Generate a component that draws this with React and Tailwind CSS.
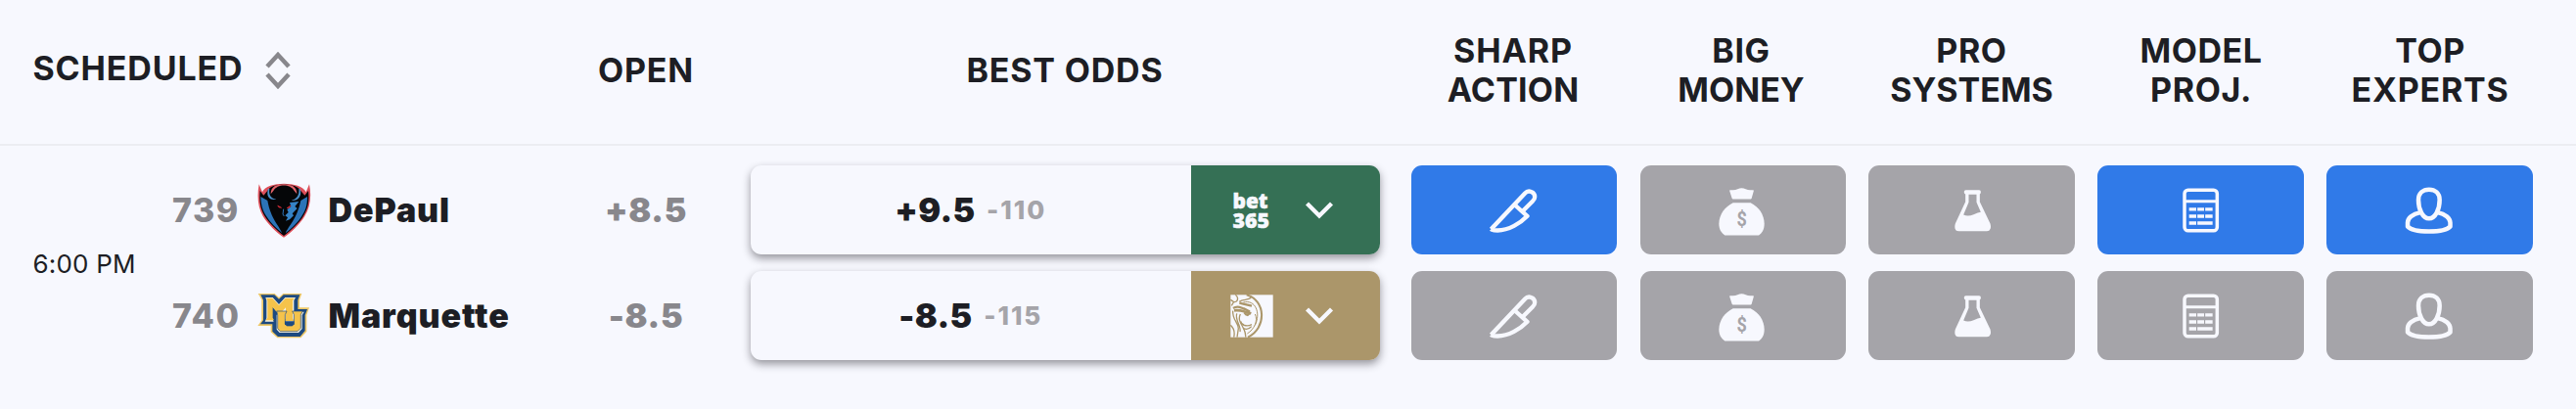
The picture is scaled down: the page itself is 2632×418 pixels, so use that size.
import React from "react";

const COLS = "grid grid-cols-[573px_174px_683px_1170px]";

function DePaulLogo() {
  return (
    <svg width="56" height="60" viewBox="36 44 168 180" className="shrink-0">
      <path d="M44 54C37 92 41 126 56 152C72 178 98 202 120 217C142 202 168 178 184 152C200 126 206 92 198 54L188 78C172 44 68 44 54 78Z" fill="#dd4f5a" />
      <path d="M47 74C44 104 48 128 60 149C76 175 100 196 120 212C140 196 166 175 181 149C194 128 199 104 195 74L184 88L172 74C160 48 80 48 70 74L58 88Z" fill="#050608" />
      <path d="M49 92C50 120 56 135 64 148C78 171 96 188 115 204C104 178 80 160 70 104Z" fill="#2c74b8" />
      <path d="M192 92C192 120 186 135 177 148C164 170 148 186 125 204C136 180 160 160 172 104Z" fill="#2c74b8" />
      <path d="M80 84C80 60 98 55 120 54C142 55 160 60 160 84L152 74C140 52 100 52 88 74Z" fill="#e2636a" />
      <path d="M92 74C96 58 144 58 149 76L156 100L140 160L120 208L104 178L84 128L84 102Z" fill="#050608" />
      <path d="M72 68C65 92 76 104 97 100C80 98 73 86 76 68ZM170 68C177 92 162 106 143 104C158 100 169 88 166 68Z" fill="#4b8fc9" />
      <path d="M138 110L166 107L154 122L161 128L146 144L150 150L138 162L126 166L132 156L124 150L134 140L130 132L142 122Z" fill="#3583c6" />
      <path d="M101 119L113 126L105 125ZM141 119L129 127L137 126Z" fill="#e2303c" stroke="#e2303c" strokeWidth="1.5" />
      <path d="M119 130L117 146L121 152" fill="none" stroke="#2c74b8" strokeWidth="3" />
    </svg>
  );
}

function MarquetteLogo() {
  return (
    <svg width="56" height="50" viewBox="36 384 168 150" className="shrink-0">
      <path d="M41 390H92L105 402L118 390H175L168 410V433H198L190 456V506L172 526H100L80 508V489H40L52 472V409Z" fill="#edc766" />
      <path d="M49 394H91L105 407L119 394H169L163 410V438H192L185 456V504L170 522H102L85 506V484H48L57 472V410Z" fill="#1d4a80" />
      <path d="M64 402H86L105 423L124 402H156L151 411V452H157V446H182L176 456V498L165 510H107L98 500V456L106 444H114L105 452L84 429V466L89 476H62L67 466V411Z" fill="#f5f0df" />
      <path d="M66 404H85L105 426L125 404H152L147 412V466L151 474H120L126 466V433L105 455L86 432V464L90 472H65L70 464V412Z" fill="#f5c34b" />
      <path d="M98 444H129L124 455V482L130 488H145L151 482V455L146 444H178L172 455V496L162 506H109L101 497V456Z" fill="#f5c34b" stroke="#1d4a80" strokeWidth="2" />
      <path d="M123 475H152V484L146 490H129L123 484Z" fill="#1d4a80" />
    </svg>
  );
}

function KnifeIcon() {
  return (
    <svg width="60" height="60" viewBox="260.5 73.5 180 180">
      <g fill="none" stroke="#f7f8fe" strokeWidth="13" strokeLinejoin="round">
        <path d="M280 221L384 111C394 100 414 106 414 122C414 128 411 132 407 136L377 166" />
        <path d="M353 147L391 181C370 203 334 225 300 225C289 225 282 223 280 221" />
      </g>
    </svg>
  );
}

function MoneyBagIcon({ active }) {
  return (
    <svg width="60" height="60" viewBox="961 73.5 180 180">
      <g fill="#f7f8fe">
        <path d="M1009 102C1014 100 1026 102 1034 98C1042 94 1051 94 1059 98C1067 102 1079 100 1084 102L1077 127Q1076 129 1074 129H1020Q1018 129 1017 127Z" />
        <path d="M1020 140H1074C1098 152 1116 175 1116 205C1116 222 1109 234 1099 240H995C985 234 977 222 977 205C977 175 996 152 1020 140Z" />
      </g>
      <text x="1047" y="210" textAnchor="middle" fontSize="60" textLength="31" lengthAdjust="spacingAndGlyphs" className={active ? "fill-[#307ae8] font-['Roboto'] font-bold" : "fill-[#a5a4a9] font-['Roboto'] font-bold"}>$</text>
    </svg>
  );
}

function FlaskIcon() {
  return (
    <svg width="60" height="60" viewBox="283.5 73.5 180 180">
      <g fill="#f7f8fe">
        <rect x="349" y="101" width="51" height="13" rx="5" />
        <path fillRule="evenodd" d="M353 110V137L322 204Q316 227 333 227H418Q435 227 429 204L397 137V110ZM363 114V139L347 177Q361 183 378 176Q392 170 400 169L387 139V114Z" />
      </g>
    </svg>
  );
}

function CalculatorIcon() {
  return (
    <svg width="60" height="60" viewBox="986 73.5 180 180">
      <rect x="1025" y="101" width="100" height="125" rx="11" fill="none" stroke="#f7f8fe" strokeWidth="10.5" />
      <path d="M1025 136H1125" stroke="#f7f8fe" strokeWidth="9" />
      <path d="M1039 160H1061M1064.500 160H1085M1088.500 160H1111M1039 181.500H1061M1064.500 181.500H1085M1088.500 181.500H1111M1039 202.500H1061M1064.500 202.500H1111" stroke="#f7f8fe" strokeWidth="10" />
    </svg>
  );
}

function PersonIcon() {
  return (
    <svg width="60" height="60" viewBox="337 73.5 180 180">
      <g fill="none" stroke="#f7f8fe" strokeWidth="13.5" strokeLinejoin="round">
        <path d="M426.500 99.500C445 99.500 459 111 459 131C459 160 446 188.500 426.500 188.500C407 188.500 394 160 394 131C394 111 408 99.500 426.500 99.500Z" />
        <path d="M400 170C375 175 361 188 361 201V213C378 233 475 233 491.500 213V201C491 188 477 175 453 170" />
      </g>
    </svg>
  );
}

function Chevron() {
  return (
    <svg width="30" height="20" viewBox="0 0 30 20">
      <path d="M2.500 3L15 15.500L27.500 3" fill="none" stroke="#f7f8fe" strokeWidth="4.300" />
    </svg>
  );
}

function Bet365Logo() {
  return (
    <svg width="44" height="44" viewBox="0 0 44 44" className="overflow-visible fill-[#f7f8fe] stroke-[#f7f8fe] font-['Open_Sans',sans-serif] font-extrabold">
      <text x="2.5" y="20" fontSize="21.5" textLength="36" lengthAdjust="spacingAndGlyphs" strokeWidth="0.5">bet</text>
      <text x="2.5" y="39.500" fontSize="21.5" textLength="37.5" lengthAdjust="spacingAndGlyphs" strokeWidth="0.5">365</text>
    </svg>
  );
}

function LionLogo() {
  return (
    <svg width="44" height="44" viewBox="772 452 132 132">
      <rect x="773" y="453" width="130" height="130" fill="#f7f8fe" />
      <g fill="none" stroke="#ab966a" strokeWidth="4" strokeLinecap="butt">
        <path d="M822 453C882 470 884 555 826 583" strokeWidth="6" />
        <path d="M812 476C850 466 866 510 848 546" strokeWidth="3" />
        <path d="M773 468L782 474C794 478 800 462 788 453M782 476L776 486M800 474C812 466 826 470 836 462" />
        <path d="M800 478L838 487M781 494C796 484 810 494 832 504" strokeWidth="7" />
        <path d="M784 501C800 498 816 504 836 510" strokeWidth="8" />
        <path d="M780 502C778 530 796 536 797 556L793 583M792 510C786 532 806 548 802 566" strokeWidth="4" />
        <path d="M803 512C790 538 822 552 819 583M773 546C784 556 786 570 783 583" strokeWidth="4" />
        <path d="M804 534C806 546 822 552 838 544M812 556C822 560 832 556 837 550" strokeWidth="4" />
        <path d="M848 512C858 532 846 558 824 572" strokeWidth="3" />
      </g>
      <path d="M812 508L834 511L826 519L818 516Z" fill="#ab966a" />
    </svg>
  );
}

const teams = [
  { id: "739", name: "DePaul", logo: <DePaulLogo />, open: "+8.5", line: "+9.5", price: "-110", active: [true, false, false, true, true] },
  { id: "740", name: "Marquette", logo: <MarquetteLogo />, open: "-8.5", line: "-8.5", price: "-115", active: [false, false, false, false, false] },
];

const icons = [KnifeIcon, MoneyBagIcon, FlaskIcon, CalculatorIcon, PersonIcon];

export default function App() {
  return (
    <div className="h-[418px] w-[2632px] overflow-hidden bg-[#f7f8fe] font-['Inter',sans-serif] text-[#1d1e24]">
      <header className={`${COLS} h-[148.5px] items-center border-b-[2.5px] border-[#ecedf2] text-[34px] leading-10 font-bold whitespace-nowrap`}>
        <div className="flex items-center gap-[22.5px] pb-[7px] pl-[33.5px]">
          <span className="tracking-[0.85px]">SCHEDULED</span>
          <svg width="26" height="40" viewBox="0 0 26 40" className="mt-[5px]">
            <path d="M2 16L13 4L24 16M2 24L13 36L24 24" fill="none" stroke="#88878c" strokeWidth="4.500" />
          </svg>
        </div>
        <div className="pb-0.5 text-center tracking-[0.8px]">OPEN</div>
        <div className="pr-px pb-0.5 text-center tracking-[0.8px]">BEST ODDS</div>
        <div className="grid grid-cols-5 pb-[3px] text-center">
          <div className="pr-0.5"><div className="tracking-[0.9px]">SHARP</div><div className="tracking-[0.2px]">ACTION</div></div>
          <div className="pr-1"><div className="tracking-[0.6px]">BIG</div><div>MONEY</div></div>
          <div className="pr-px"><div className="tracking-[0.6px]">PRO</div><div>SYSTEMS</div></div>
          <div><div className="tracking-[0.5px]">MODEL</div><div className="tracking-[0.7px]">PROJ.</div></div>
          <div><div className="tracking-[0.6px]">TOP</div><div className="tracking-[0.75px]">EXPERTS</div></div>
        </div>
      </header>

      <main className={`${COLS} pt-[20.5px]`}>
        <div className="flex items-center pl-[33.5px]">
          <div className="w-[142.5px] pt-0.5 text-[26px] tracking-[0.2px]">6:00 PM</div>
          <div className="flex flex-col gap-[17px]">
            {teams.map((t) => (
              <div key={t.id} className="flex h-[91px] items-center text-[34px] font-black">
                <span className="w-[86px] font-extrabold tracking-[1.5px] text-[#88878c]">{t.id}</span>
                {t.logo}
                <span className="ml-[17.5px] tracking-[0.9px]">{t.name}</span>
              </div>
            ))}
          </div>
        </div>

        <div className="flex flex-col gap-[17px]">
          {teams.map((t) => (
            <div key={t.id} className="flex h-[91px] items-center justify-center text-[34px] font-black tracking-[0.7px] text-[#88878c]">{t.open}</div>
          ))}
        </div>

        <div className="flex flex-col gap-[17px] px-5">
          {teams.map((t, i) => (
            <div key={t.id} className="flex h-[91px] overflow-hidden rounded-[11px] bg-[#f7f8fe] shadow-[0_4px_9px_rgba(30,29,38,0.45)]">
              <div className="flex w-[449.5px] items-center justify-center gap-[11.5px]">
                <span className="text-[34px] font-black tracking-[0.4px]">{t.line}</span>
                <span className="text-[26px] font-extrabold tracking-[2px] text-[#a5a4a9]">{t.price}</span>
              </div>
              <div className={i === 0 ? "flex flex-1 items-center gap-[31.5px] bg-[#357055] pl-[40.5px]" : "flex flex-1 items-center gap-[31.5px] bg-[#ab966a] pl-[40.5px]"}>
                {i === 0 ? <Bet365Logo /> : <LionLogo />}
                <Chevron />
              </div>
            </div>
          ))}
        </div>

        <div className="flex flex-col gap-[17px] pr-[12.3px] pl-[11.7px]">
          {teams.map((t) => (
            <div key={t.id} className="grid grid-cols-5 gap-[23.4px]">
              {icons.map((Icon, i) => (
                <button key={i} className={t.active[i] ? "flex h-[91px] items-center justify-center rounded-[11px] bg-[#307ae8]" : "flex h-[91px] items-center justify-center rounded-[11px] bg-[#a5a4a9]"}>
                  <Icon active={t.active[i]} />
                </button>
              ))}
            </div>
          ))}
        </div>
      </main>
    </div>
  );
}
